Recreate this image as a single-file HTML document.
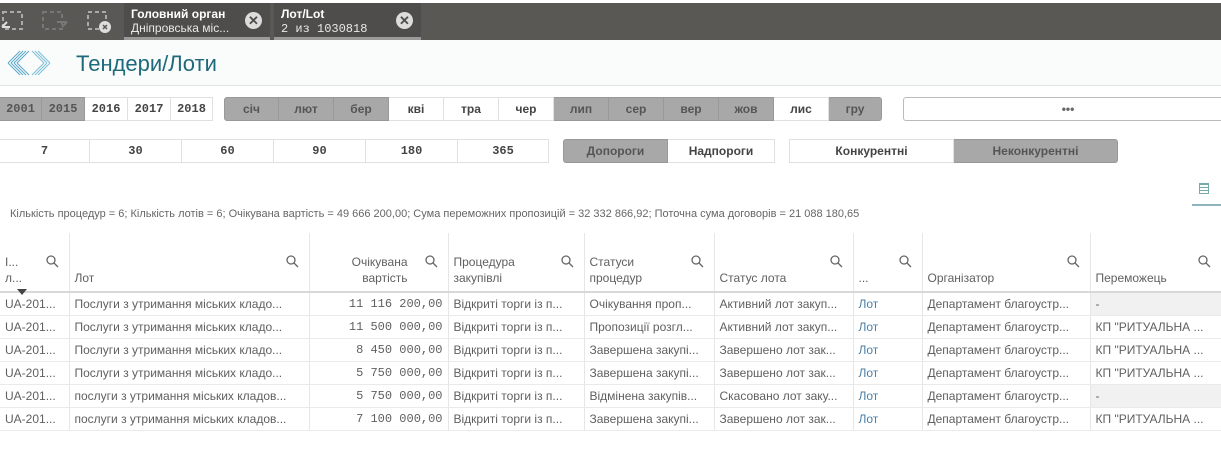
<!DOCTYPE html>
<html><head><meta charset="utf-8"><style>
*{margin:0;padding:0;box-sizing:border-box}
body{width:1221px;height:468px;overflow:hidden;background:#fff;font-family:"Liberation Sans",sans-serif;color:#595959;position:relative}
.a{position:absolute}
.tb{left:0;top:3px;width:1221px;height:37px;background:#595855}
.tab{top:3px;height:37px;background:#4e4d4b;color:#fff;font-size:12px;padding:4px 0 0 7px;line-height:14px;border-bottom:3px solid #9a9a9a}
.tab b{display:block;font-size:12px}
.tab span{color:#e8e8e8}
.x{position:absolute;right:8px;top:9px;width:17px;height:17px;border-radius:50%;background:#dcdcdc;color:#4e4d4b;font-size:13px;font-weight:bold;text-align:center;line-height:17px}
.hd{left:0;top:40px;width:1221px;height:46px;background:#fafbfb;border-bottom:1px solid #e3e3e3}
.btn{position:absolute;height:24px;text-align:center;line-height:23px;font-size:12px;font-weight:bold;color:#444;border:1px solid #e0e0e0;border-left:none}
.g{background:#a8a8a8;color:#555;border-color:#999}
.m{font-family:"Liberation Mono",monospace}
table{position:absolute;left:0;top:233px;width:1221px;border-collapse:collapse;font-size:12px;table-layout:fixed}
td,th{border-right:1px solid #e6e6e6;border-bottom:1px solid #eaeaea;padding:0 5px;white-space:nowrap;overflow:hidden;height:23px;font-weight:normal;text-align:left;color:#606060}
th{height:59px;vertical-align:bottom;padding-bottom:5px;line-height:16px;position:relative;border-bottom:2px solid #d8d8d8}
th svg{position:absolute;top:22px;right:10px}
.r{text-align:right}
.l{color:#4a7fa8}
.sh{background:#f1f1f1}
</style></head><body>
<div class="a tb"></div>
<svg class="a" style="left:0;top:8px" width="120" height="26" viewBox="0 0 120 26" fill="none" stroke-width="2">
<rect x="3" y="4" width="19" height="17" stroke="#aaa" stroke-dasharray="4 3"/>
<rect x="43" y="4" width="19" height="17" stroke="#777" stroke-dasharray="4 3"/>
<rect x="88" y="4" width="18" height="17" stroke="#aaa" stroke-dasharray="4 3"/>
<path d="M2 19 L7 14 M2 19 H10" stroke="#ddd"/>
<path d="M62 19 L67 14 M57 14 H67" stroke="#777"/>
<circle cx="105" cy="19" r="6" fill="#ddd" stroke="none"/>
<path d="M103 17 L107 21 M107 17 L103 21" stroke="#595855" stroke-width="1.5"/>
</svg>
<div class="a tab" style="left:124px;width:146px"><b>Головний орган</b><span>Дніпровська міс...</span><div class="x">✕</div></div>
<div class="a tab" style="left:274px;width:147px"><b>Лот/Lot</b><span class="m" style="font-size:12px">2 из 1030818</span><div class="x">✕</div></div>
<div class="a hd"></div>
<svg class="a" style="left:6px;top:47px" width="46" height="32" viewBox="0 0 46 32" stroke="#5aa8c8" stroke-width="1" fill="none">
<path d="M2 16 L14 4 M5 16 L17 4 M8 16 L20 4 M11 16 L23 4 M2 16 L14 28 M5 16 L17 28 M8 16 L20 28 M11 16 L23 28"/>
<path d="M44 16 L32 4 M41 16 L29 4 M38 16 L26 4 M44 16 L32 28 M41 16 L29 28 M38 16 L26 28" stroke="#7cc0d8"/>
</svg>
<div class="a" style="left:76px;top:51px;font-size:22px;color:#1d6a7a">Тендери/Лоти</div>

<div class="btn m g" style="left:0;top:97px;width:42px">2001</div>
<div class="btn m g" style="left:42px;top:97px;width:43px">2015</div>
<div class="btn m" style="left:85px;top:97px;width:43px">2016</div>
<div class="btn m" style="left:128px;top:97px;width:43px">2017</div>
<div class="btn m" style="left:171px;top:97px;width:42px">2018</div>

<div class="btn g" style="left:224px;top:97px;width:55px;border-left:1px solid #999;border-radius:3px 0 0 3px">січ</div>
<div class="btn g" style="left:279px;top:97px;width:55px">лют</div>
<div class="btn g" style="left:334px;top:97px;width:55px">бер</div>
<div class="btn" style="left:389px;top:97px;width:55px">кві</div>
<div class="btn" style="left:444px;top:97px;width:55px">тра</div>
<div class="btn" style="left:499px;top:97px;width:55px">чер</div>
<div class="btn g" style="left:554px;top:97px;width:55px">лип</div>
<div class="btn g" style="left:609px;top:97px;width:55px">сер</div>
<div class="btn g" style="left:664px;top:97px;width:55px">вер</div>
<div class="btn g" style="left:719px;top:97px;width:55px">жов</div>
<div class="btn" style="left:774px;top:97px;width:55px">лис</div>
<div class="btn g" style="left:829px;top:97px;width:53px;border-radius:0 3px 3px 0">гру</div>
<div class="btn" style="left:903px;top:97px;width:330px;border-left:1px solid #bbb;border-color:#bbb;border-radius:3px;color:#666">•••</div>

<div class="btn m" style="left:0;top:139px;width:90px">7</div>
<div class="btn m" style="left:90px;top:139px;width:92px">30</div>
<div class="btn m" style="left:182px;top:139px;width:92px">60</div>
<div class="btn m" style="left:274px;top:139px;width:92px">90</div>
<div class="btn m" style="left:366px;top:139px;width:92px">180</div>
<div class="btn m" style="left:458px;top:139px;width:91px">365</div>
<div class="btn g" style="left:563px;top:139px;width:105px;border-left:1px solid #999;border-radius:3px 0 0 3px">Допороги</div>
<div class="btn" style="left:668px;top:139px;width:107px">Надпороги</div>
<div class="btn" style="left:789px;top:139px;width:165px;border-left:1px solid #e0e0e0">Конкурентні</div>
<div class="btn g" style="left:954px;top:139px;width:164px;border-radius:0 3px 3px 0">Неконкурентні</div>

<div class="a" style="left:1199px;top:183px;width:10px;height:11px;border:1px solid #7aa;background:repeating-linear-gradient(#7aa 0 1px,transparent 1px 3px)"></div>
<div class="a" style="left:1192px;top:204px;width:29px;height:2px;background:#8fb5c0"></div>
<div class="a" style="left:10px;top:208px;font-size:11px;color:#666">Кількість процедур = 6; Кількість лотів = 6; Очікувана вартість = 49 666 200,00; Сума переможних пропозицій = 32 332 866,92; Поточна сума договорів = 21 088 180,65</div>

<table>
<colgroup><col style="width:69px"><col style="width:240px"><col style="width:139px"><col style="width:136px"><col style="width:130px"><col style="width:139px"><col style="width:69px"><col style="width:168px"><col style="width:131px"></colgroup>
<tr><th>І...<br>л...<svg width="13" height="13" viewBox="0 0 13 13" fill="none" stroke="#666" stroke-width="1.3"><circle cx="5" cy="5" r="4"/><path d="M8 8 L12 12"/></svg></th><th>Лот<svg width="13" height="13" viewBox="0 0 13 13" fill="none" stroke="#666" stroke-width="1.3"><circle cx="5" cy="5" r="4"/><path d="M8 8 L12 12"/></svg></th><th class="r" style="padding-right:40px">Очікувана<br>вартість<svg width="13" height="13" viewBox="0 0 13 13" fill="none" stroke="#666" stroke-width="1.3"><circle cx="5" cy="5" r="4"/><path d="M8 8 L12 12"/></svg></th><th>Процедура<br>закупівлі<svg width="13" height="13" viewBox="0 0 13 13" fill="none" stroke="#666" stroke-width="1.3"><circle cx="5" cy="5" r="4"/><path d="M8 8 L12 12"/></svg></th><th>Статуси<br>процедур<svg width="13" height="13" viewBox="0 0 13 13" fill="none" stroke="#666" stroke-width="1.3"><circle cx="5" cy="5" r="4"/><path d="M8 8 L12 12"/></svg></th><th>Статус лота<svg width="13" height="13" viewBox="0 0 13 13" fill="none" stroke="#666" stroke-width="1.3"><circle cx="5" cy="5" r="4"/><path d="M8 8 L12 12"/></svg></th><th>...<svg width="13" height="13" viewBox="0 0 13 13" fill="none" stroke="#666" stroke-width="1.3"><circle cx="5" cy="5" r="4"/><path d="M8 8 L12 12"/></svg></th><th>Організатор<svg width="13" height="13" viewBox="0 0 13 13" fill="none" stroke="#666" stroke-width="1.3"><circle cx="5" cy="5" r="4"/><path d="M8 8 L12 12"/></svg></th><th>Переможець<svg width="13" height="13" viewBox="0 0 13 13" fill="none" stroke="#666" stroke-width="1.3"><circle cx="5" cy="5" r="4"/><path d="M8 8 L12 12"/></svg></th></tr>
<tr><td>UA-201...</td><td>Послуги з утримання міських кладо...</td><td class="r m">11 116 200,00</td><td>Відкриті торги із п...</td><td>Очікування проп...</td><td>Активний лот закуп...</td><td class="l">Лот</td><td>Департамент благоустр...</td><td class="sh">-</td></tr>
<tr><td>UA-201...</td><td>Послуги з утримання міських кладо...</td><td class="r m">11 500 000,00</td><td>Відкриті торги із п...</td><td>Пропозиції розгл...</td><td>Активний лот закуп...</td><td class="l">Лот</td><td>Департамент благоустр...</td><td>КП "РИТУАЛЬНА ...</td></tr>
<tr><td>UA-201...</td><td>Послуги з утримання міських кладо...</td><td class="r m">8 450 000,00</td><td>Відкриті торги із п...</td><td>Завершена закупі...</td><td>Завершено лот зак...</td><td class="l">Лот</td><td>Департамент благоустр...</td><td>КП "РИТУАЛЬНА ...</td></tr>
<tr><td>UA-201...</td><td>Послуги з утримання міських кладо...</td><td class="r m">5 750 000,00</td><td>Відкриті торги із п...</td><td>Завершена закупі...</td><td>Завершено лот зак...</td><td class="l">Лот</td><td>Департамент благоустр...</td><td>КП "РИТУАЛЬНА ...</td></tr>
<tr><td>UA-201...</td><td>послуги з утримання міських кладов...</td><td class="r m">5 750 000,00</td><td>Відкриті торги із п...</td><td>Відмінена закупів...</td><td>Скасовано лот заку...</td><td class="l">Лот</td><td>Департамент благоустр...</td><td class="sh">-</td></tr>
<tr><td>UA-201...</td><td>послуги з утримання міських кладов...</td><td class="r m">7 100 000,00</td><td>Відкриті торги із п...</td><td>Завершена закупі...</td><td>Завершено лот зак...</td><td class="l">Лот</td><td>Департамент благоустр...</td><td>КП "РИТУАЛЬНА ...</td></tr>
</table>
<div class="a" style="left:17px;top:289px;width:0;height:0;border-left:5px solid transparent;border-right:5px solid transparent;border-top:6px solid #444"></div>
</body></html>
